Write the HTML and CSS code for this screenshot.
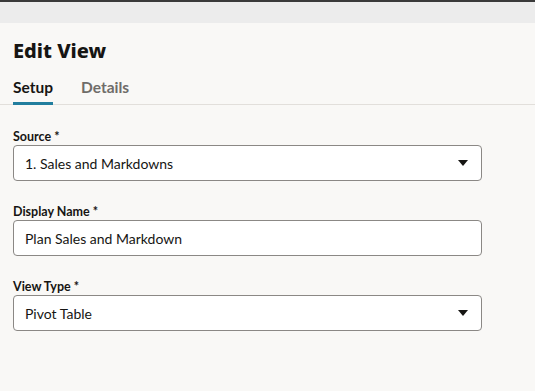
FILE: index.html
```html
<!DOCTYPE html>
<html>
<head>
<meta charset="utf-8">
<link rel="stylesheet" href="styles.css">
</head>
<body>
<div class="topband"></div>
<div class="panel">
  <h1 class="title">Edit View</h1>
  <div class="tabs">
    <div class="tab active">Setup</div>
    <div class="tab">Details</div>
  </div>
  <div class="form">
    <div class="field">
      <label class="label">Source *</label>
      <div class="control select">
        <span class="value">1. Sales and Markdowns</span>
        <span class="caret"></span>
      </div>
    </div>
    <div class="field">
      <label class="label">Display Name *</label>
      <div class="control">
        <span class="value">Plan Sales and Markdown</span>
      </div>
    </div>
    <div class="field">
      <label class="label">View Type *</label>
      <div class="control select">
        <span class="value">Pivot Table</span>
        <span class="caret"></span>
      </div>
    </div>
  </div>
</div>
</body>
</html>
```

FILE: styles.css
```css
html, body {
  margin: 0;
  padding: 0;
  background: #f9f8f6;
  font-family: "Lato", "Noto Sans", sans-serif;
  color: #161513;
}
.topband {
  height: 23px;
  background: #ececec;
  border-top: 2px solid #3a3a3a;
  box-sizing: border-box;
}
.panel {
  padding: 0 0 0 13px;
}
.title {
  margin: 0;
  padding-top: 14px;
  font-family: "Noto Sans", sans-serif;
  font-size: 20px;
  font-weight: 800;
  line-height: 28px;
}
.tabs {
  display: flex;
  gap: 28px;
  margin-top: 12px;
  border-bottom: 1px solid #e2dfdb;
  margin-left: -13px;
  padding-left: 13px;
}
.tab {
  font-size: 15.5px;
  font-weight: 700;
  color: #6f6c69;
  line-height: 20px;
  padding-bottom: 5px;
  border-bottom: 3px solid transparent;
  margin-bottom: -1px;
}
.tab.active {
  color: #161513;
  border-bottom-color: #227e9e;
}
.form {
  padding-top: 24px;
  width: 469px;
  display: flex;
  flex-direction: column;
  gap: 23px;
}
.field {
  display: flex;
  flex-direction: column;
}
.label {
  font-size: 12.5px;
  font-weight: 700;
  line-height: 16px;
  color: #161513;
}
.control {
  height: 36px;
  box-sizing: border-box;
  background: #fff;
  border: 1px solid #8b8885;
  border-radius: 4px;
  display: flex;
  align-items: center;
  padding: 0 12px 0 11px;
}
.value {
  flex: 1;
  font-size: 14px;
}
.caret {
  width: 0;
  height: 0;
  border-left: 5px solid transparent;
  border-right: 5px solid transparent;
  border-top: 6px solid #161513;
  margin-right: 1px;
}
```
